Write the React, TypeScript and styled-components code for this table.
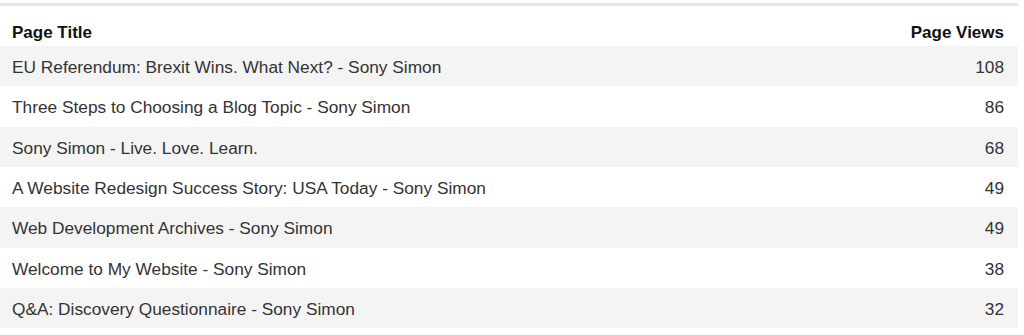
import React from 'react';
import styled, { createGlobalStyle } from 'styled-components';

const GlobalStyle = createGlobalStyle`
  html, body {
    margin: 0;
    padding: 0;
    background: #fff;
  }
  body {
    font-family: "Liberation Sans", Arial, sans-serif;
  }
`;

// Data shown in the table
const rows = [
  { title: 'EU Referendum: Brexit Wins. What Next? - Sony Simon', views: 108 },
  { title: 'Three Steps to Choosing a Blog Topic - Sony Simon', views: 86 },
  { title: 'Sony Simon - Live. Love. Learn.', views: 68 },
  { title: 'A Website Redesign Success Story: USA Today - Sony Simon', views: 49 },
  { title: 'Web Development Archives - Sony Simon', views: 49 },
  { title: 'Welcome to My Website - Sony Simon', views: 38 },
  { title: 'Q&A: Discovery Questionnaire - Sony Simon', views: 32 },
];

const Wrapper = styled.div`
  width: 1018px;
  padding-top: 3px;
`;

const Table = styled.div`
  border-top: 3px solid #e6e6e6;
  display: flex;
  flex-direction: column;
`;

const HeaderRow = styled.div`
  display: flex;
  align-items: flex-end;
  justify-content: space-between;
  height: 40px;
  box-sizing: border-box;
  padding: 0 14px 3px 12px;
  font-size: 17px;
  font-weight: bold;
  color: #111;
`;

const Row = styled.div<{ $striped: boolean }>`
  display: flex;
  align-items: center;
  justify-content: space-between;
  height: 40.33px;
  box-sizing: border-box;
  padding: 3px 14px 0 12px;
  background: ${(p) => (p.$striped ? '#f4f4f4' : '#fff')};
  font-size: 17.3px;
  color: #333;
`;

const Title = styled.span`
  white-space: nowrap;
`;

const Views = styled.span`
  text-align: right;
`;

const App = () => {
  return (
    <Wrapper>
      <GlobalStyle />
      <Table>
        <HeaderRow>
          <span>Page Title</span>
          <span>Page Views</span>
        </HeaderRow>
        {rows.map((r, i) => (
          <Row key={r.title} $striped={i % 2 === 0}>
            <Title>{r.title}</Title>
            <Views>{r.views}</Views>
          </Row>
        ))}
      </Table>
    </Wrapper>
  );
};

export default App;
